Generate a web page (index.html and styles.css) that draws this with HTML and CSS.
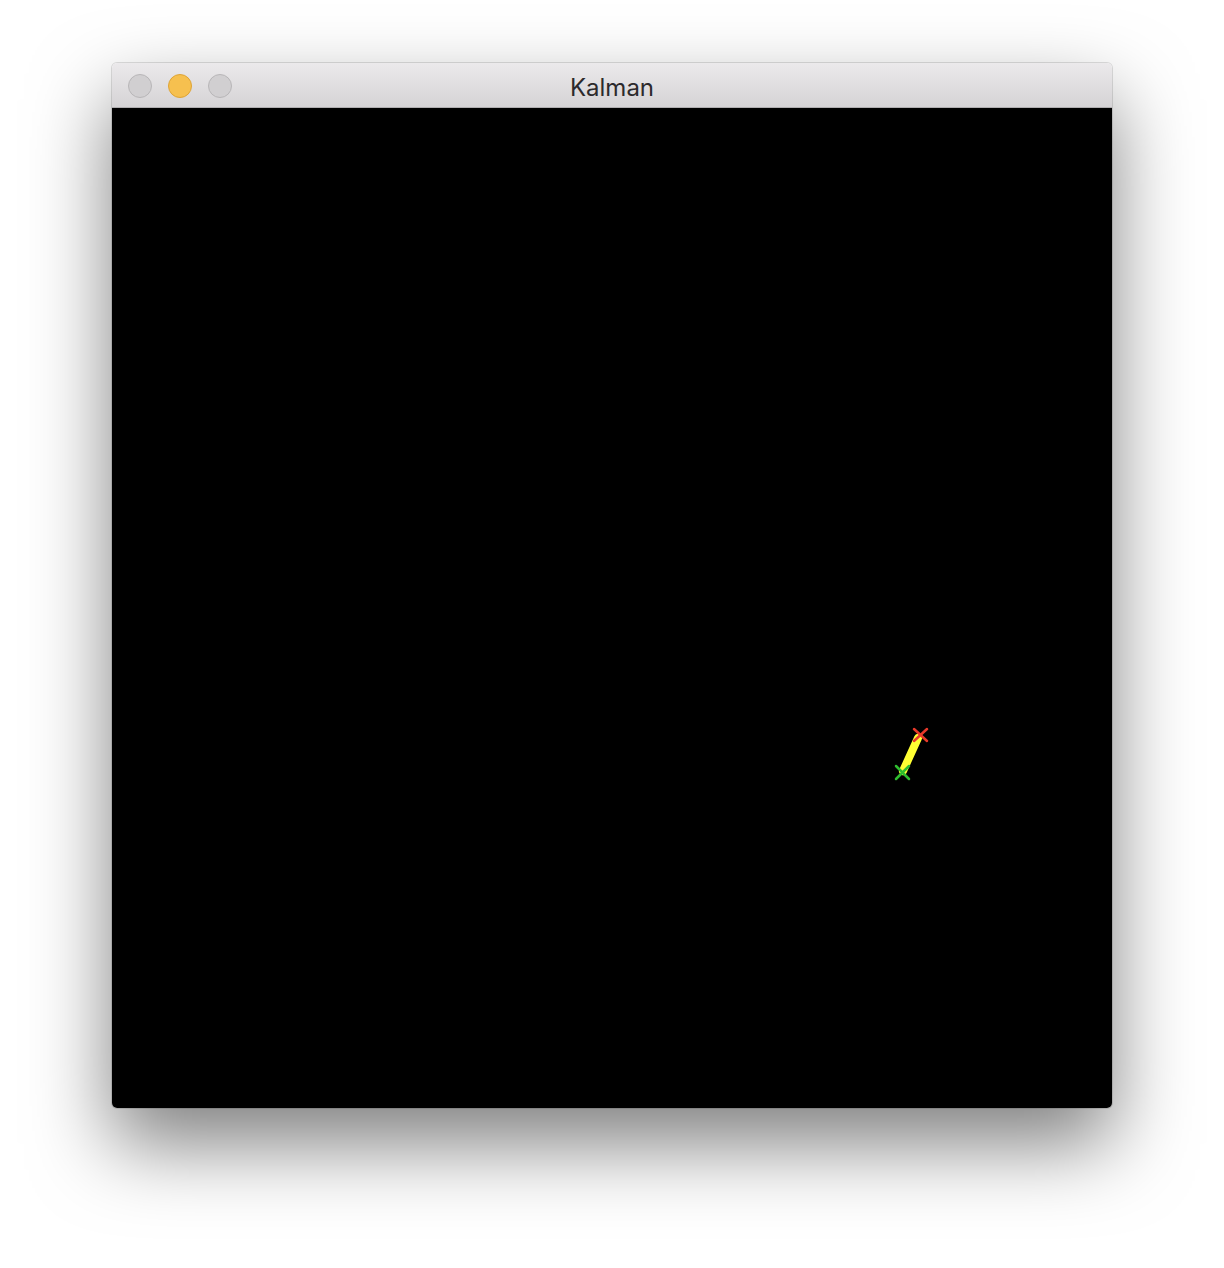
FILE: index.html
```html
<!DOCTYPE html>
<html>
<head>
<meta charset="utf-8">
<link rel="stylesheet" href="styles.css">
</head>
<body>
<div class="window">
  <div class="titlebar">
    <div class="lights">
      <span class="light"></span>
      <span class="light min"></span>
      <span class="light"></span>
    </div>
    <div class="title">Kalman</div>
  </div>
  <div class="canvas">
    <svg class="plot" width="1000" height="1000" viewBox="0 0 1000 1000">
      <line x1="806" y1="630" x2="791" y2="663" stroke="#ffff33" stroke-width="8" stroke-linecap="round"/>
      <g stroke="#e8392a" stroke-width="2.5" stroke-linecap="round">
        <line x1="802" y1="621" x2="815" y2="633"/>
        <line x1="815" y1="621" x2="802" y2="633"/>
      </g>
      <g stroke="#2fbd2f" stroke-width="2.5" stroke-linecap="round">
        <line x1="784" y1="658" x2="797" y2="671"/>
        <line x1="797" y1="658" x2="784" y2="671"/>
      </g>
    </svg>
  </div>
</div>
</body>
</html>
```
FILE: styles.css
```css
html, body {
  margin: 0;
  padding: 0;
  background: #ffffff;
}
body {
  width: 1224px;
  height: 1268px;
  overflow: hidden;
  font-family: "Inter", "Liberation Sans", sans-serif;
}
.window {
  margin: 63px 0 0 112px;
  width: 1000px;
  border-radius: 5px;
  overflow: hidden;
  box-shadow: 0 36px 80px rgba(0,0,0,0.5), 0 0 0 1px rgba(0,0,0,0.12);
}
.titlebar {
  height: 44px;
  display: flex;
  align-items: center;
  position: relative;
  background: linear-gradient(#ebe9eb, #d5d3d5);
  border-bottom: 1px solid #b0aeb0;
}
.lights {
  display: flex;
  gap: 16px;
  padding-left: 16px;
  padding-top: 2px;
}
.light {
  width: 22px;
  height: 22px;
  border-radius: 50%;
  background: #d1cfd1;
  border: 1px solid #b8b6b8;
}
.light.min {
  background: #f6c04f;
  border-color: #dea436;
}
.title {
  position: absolute;
  left: 0;
  right: 0;
  top: 0;
  bottom: 0;
  display: flex;
  align-items: center;
  justify-content: center;
  font-size: 24px;
  color: #2c2a2c;
  padding-top: 4px;
}
.canvas {
  height: 1000px;
  background: #000;
}
.plot {
  display: block;
}
```
